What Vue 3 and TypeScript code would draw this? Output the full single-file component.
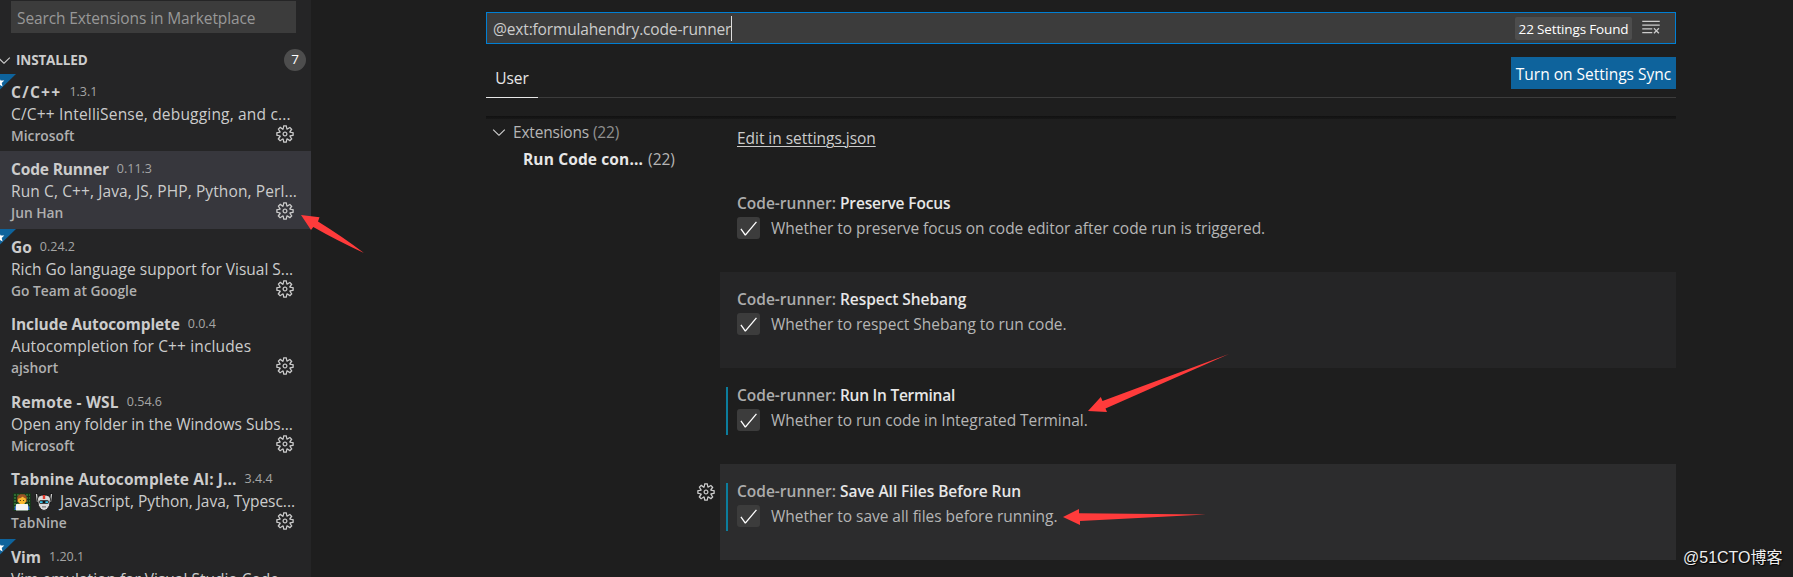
<script setup lang="ts">
interface Extension {
  name: string
  version: string
  description: string
  publisher: string
  /** letter spacing of the name and of the description, in px */
  tracking: [number, number]
  recommended?: boolean
  selected?: boolean
  emoji?: boolean
}

interface Setting {
  label: string
  description: string
  /** letter spacing of the label, in px */
  tracking: number
  modified?: boolean
  shade?: 'hovered' | 'focused'
}

const extensions: Extension[] = [
  { name: 'C/C++', version: '1.3.1', description: 'C/C++ IntelliSense, debugging, and c...', publisher: 'Microsoft', tracking: [1.3, 0.18], recommended: true },
  { name: 'Code Runner', version: '0.11.3', description: 'Run C, C++, Java, JS, PHP, Python, Perl...', publisher: 'Jun Han', tracking: [-0.15, 0.11], selected: true },
  { name: 'Go', version: '0.24.2', description: 'Rich Go language support for Visual S...', publisher: 'Go Team at Google', tracking: [0, 0], recommended: true },
  { name: 'Include Autocomplete', version: '0.0.4', description: 'Autocompletion for C++ includes', publisher: 'ajshort', tracking: [-0.1, 0.14] },
  { name: 'Remote - WSL', version: '0.54.6', description: 'Open any folder in the Windows Subs...', publisher: 'Microsoft', tracking: [0.2, -0.03] },
  { name: 'Tabnine Autocomplete AI: J...', version: '3.4.4', description: 'JavaScript, Python, Java, Typesc...', publisher: 'TabNine', tracking: [0.1, -0.03], emoji: true },
  { name: 'Vim', version: '1.20.1', description: 'Vim emulation for Visual Studio Code', publisher: 'vscodevim', tracking: [0, 0], recommended: true },
]

const settings: Setting[] = [
  { label: 'Preserve Focus', description: 'Whether to preserve focus on code editor after code run is triggered.', tracking: -0.14 },
  { label: 'Respect Shebang', description: 'Whether to respect Shebang to run code.', tracking: -0.06, shade: 'hovered' },
  { label: 'Run In Terminal', description: 'Whether to run code in Integrated Terminal.', tracking: -0.26, modified: true },
  { label: 'Save All Files Before Run', description: 'Whether to save all files before running.', tracking: -0.06, modified: true, shade: 'focused' },
]

const gear =
  'M9.1 4.4L8.6 2H7.4l-.5 2.4-.7.3-2-1.3-.9.8 1.3 2-.2.7-2.4.5v1.2l2.4.5.3.8-1.3 2 .8.8 2-1.3.8.3.4 2.3h1.2l.5-2.4.8-.3 2 1.3.8-.8-1.3-2 .3-.8 2.3-.4V7.4l-2.4-.5-.3-.8 1.3-2-.8-.8-2 1.3-.7-.2zM9.4 1l.5 2.4L12 2.1l2 2-1.4 2.1 2.4.4v2.8l-2.4.5L14 12l-2 2-2.1-1.4-.5 2.4H6.6l-.5-2.4L4 13.9l-2-2 1.4-2.1L1 9.4V6.6l2.4-.5L2.1 4l2-2 2.1 1.4.4-2.4h2.8zm.6 7c0 1.1-.9 2-2 2s-2-.9-2-2 .9-2 2-2 2 .9 2 2zM8 9c.6 0 1-.4 1-1s-.4-1-1-1-1 .4-1 1 .4 1 1 1z'
const chevron = 'M7.976 10.072l4.357-4.357.62.618L8.284 11h-.618L3 6.333l.619-.618 4.357 4.357z'
const check = 'M14.431 3.323l-8.47 10-.79-.036-3.35-4.77.818-.574 2.978 4.24 8.051-9.506.764.646z'
const clearAll =
  'M10 12.6l.7.7 1.6-1.6 1.6 1.6.8-.7L13 11l1.7-1.6-.8-.8-1.6 1.7-1.6-1.7-.7.8 1.6 1.6-1.6 1.6zM1 4h14V3H1v1zm0 3h14V6H1v1zm8 2.5V9H1v1h8v-.5zM9 13v-1H1v1h8z'
</script>

<template>
  <div class="workbench">
    <aside class="sidebar">
      <div class="market-search"><span>Search Extensions in Marketplace</span></div>
      <header class="section">
        <svg class="section-chevron" viewBox="0 0 16 16"><path :d="chevron" /></svg>
        <span class="section-title">INSTALLED</span>
        <span class="count">7</span>
      </header>
      <ul class="extensions">
        <li v-for="ext in extensions" :key="ext.name" class="extension" :class="{ selected: ext.selected }">
          <svg v-if="ext.recommended" class="ribbon" viewBox="0 0 16 16">
            <path d="M0 0H16L0 15.5Z" fill="#0e639c" />
            <path d="M-.9 3.200L.6 6.500 4.300 6.600 1.700 9 2.600 12.500-.9 10.600Z" fill="#fff" />
          </svg>
          <div class="ext-head">
            <span class="ext-name" :style="{ letterSpacing: ext.tracking[0] + 'px' }">{{ ext.name }}</span>
            <span class="ext-version">{{ ext.version }}</span>
          </div>
          <div class="ext-desc">
            <span v-if="ext.emoji" class="emojis">
              <svg viewBox="0 0 18 18">
                <rect width="18" height="18" rx="1" fill="#17351a" />
                <path d="M1 2h16M1 5h16M1 8h16M1 11h16M1 14h16" stroke="#46a04b" stroke-width="1" stroke-dasharray="2 1" />
                <path d="M4 9V5Q4.500 1 9 1T14 5V9Z" fill="#8a4b22" />
                <circle cx="9" cy="7.300" r="4" fill="#f8b92f" />
                <path d="M4.500 5.500Q8 6 9.500 3.500 11 5.500 13.500 5.500L12 2H6Z" fill="#9a5527" />
                <circle cx="7.400" cy="7.500" r=".6" fill="#3b2410" />
                <circle cx="10.600" cy="7.500" r=".6" fill="#3b2410" />
                <path d="M1.500 17Q1.500 11 6 11H12Q16.500 11 16.500 17Z" fill="#3d7be0" />
                <rect x="3" y="11" width="12" height="6.500" rx=".5" fill="#f4f4f4" />
              </svg>
              <svg viewBox="0 0 18 18">
                <path d="M1.500 .5L2.500 9M16.500 .5L15.500 9" stroke="#111" stroke-width="2.600" />
                <path d="M1.500 1L2.500 9M16.500 1L15.500 9" stroke="#cfcfcf" stroke-width="1.300" />
                <path d="M2.500 6Q3 2 9 2T15.500 6L14.500 12.500Q12.500 17.500 9 17.500T3.500 12.500Z" fill="#dadada" stroke="#0a0a0a" stroke-width=".8" />
                <path d="M7.800 2h2.400V6H7.800Z" fill="#e23b2e" />
                <rect x="4.300" y="7.200" width="9.400" height="3.600" rx="1.200" fill="#111" />
                <path d="M5 8.200h2.600v1.800H5ZM10.400 8.200H13v1.800h-2.600Z" fill="#36c6ec" />
                <path d="M7 13.400h4v1h-4Z" fill="#666" />
              </svg>
            </span>
            <span class="ext-text" :style="{ letterSpacing: ext.tracking[1] + 'px' }">{{ ext.description }}</span>
          </div>
          <div class="ext-foot">
            <span class="ext-publisher">{{ ext.publisher }}</span>
            <svg class="gear" viewBox="0 0 16 16"><path :d="gear" /></svg>
          </div>
        </li>
      </ul>
    </aside>

    <main class="editor">
      <div class="settings-search">
        <span class="query">@ext:formulahendry.code-runner</span>
        <i class="caret"></i>
        <span class="found"><span>22 Settings Found</span></span>
        <svg class="clear" viewBox="0 0 16 16"><path :d="clearAll" /></svg>
      </div>
      <nav class="tabs">
        <span class="tab"><span>User</span></span>
        <button class="sync"><span>Turn on Settings Sync</span></button>
      </nav>
      <div class="shadow"></div>
      <div class="body">
        <div class="toc">
          <div class="toc-row">
            <svg class="toc-chevron" viewBox="0 0 16 16"><path :d="chevron" /></svg>
            <span class="toc-group">Extensions</span>
            <span class="toc-count dim">(22)</span>
          </div>
          <div class="toc-row child">
            <span class="toc-label">Run Code con...</span>
            <span class="toc-count">(22)</span>
          </div>
        </div>
        <div class="list">
          <div class="json"><a>Edit in settings.json</a></div>
          <section v-for="s in settings" :key="s.label" class="setting" :class="[s.shade, { modified: s.modified }]">
            <svg v-if="s.shade === 'focused'" class="gear setting-gear" viewBox="0 0 16 16"><path :d="gear" /></svg>
            <h3><span class="cat">Code-runner:</span> <span class="lbl" :style="{ letterSpacing: s.tracking + 'px' }">{{ s.label }}</span></h3>
            <div class="value">
              <span class="box"><svg viewBox="0 0 16 16"><path :d="check" /></svg></span>
              <span class="desc">{{ s.description }}</span>
            </div>
          </section>
        </div>
      </div>
    </main>

    <svg class="arrows" viewBox="0 0 1793 577">
      <path d="M301 215L319.500 217.300 318 221.500Q343 237 364 253 336 240 313.300 227L311 230Z" />
      <path d="M1088 411L1100.800 397 1102.500 401 1229 354 1105.500 408.500 1107 412Z" />
      <path d="M1063 517L1079 509V513.300L1206 514.500 1080 521V525Z" />
    </svg>
    <div class="watermark">@51CTO博客</div>
  </div>
</template>

<style>
body {
  margin: 0;
  background: #1e1e1e;
}
</style>

<style scoped>
.workbench {
  position: relative;
  display: flex;
  width: 1793px;
  height: 577px;
  overflow: hidden;
  background: #1e1e1e;
  color: #ccc;
  font: 15.5px/22px 'Open Sans', 'Noto Sans', sans-serif;
  white-space: nowrap;
}
svg {
  display: block;
  flex: none;
  fill: #ccc;
}
.sidebar {
  box-sizing: border-box;
  width: 311px;
  height: 577px;
  flex: none;
  overflow: hidden;
  padding-top: 1px;
  background: #252526;
}
.market-search {
  width: 279px;
  height: 32px;
  margin-left: 11px;
  padding-left: 6px;
  background: #3c3c3c;
  color: #989898;
  line-height: 35px;
  letter-spacing: -0.11px;
}
.section {
  display: flex;
  align-items: center;
  height: 27px;
  margin-top: 13.5px;
}
.section-chevron {
  width: 20px;
  height: 20px;
  margin-left: -6px;
}
.section-title {
  margin-left: 2px;
  font-size: 13.5px;
  font-weight: 700;
  letter-spacing: -0.15px;
}
.count {
  width: 22px;
  height: 22px;
  margin: 0 5px 0 auto;
  border-radius: 11px;
  background: #4d4d4d;
  color: #fff;
  font-size: 13.5px;
  line-height: 21px;
  text-align: center;
}
.extensions {
  margin: 0;
  padding: 0;
  list-style: none;
}
.extension {
  position: relative;
  box-sizing: border-box;
  height: 77.5px;
  padding: 7px 16px 0 11px;
}
.selected {
  background: #37373d;
}
.ribbon {
  position: absolute;
  top: 0;
  left: 0;
  width: 16px;
  height: 16px;
}
.ext-head {
  display: flex;
  height: 22px;
}
.ext-name {
  font-weight: 700;
}
.ext-version {
  margin-left: 8px;
  color: #a5a5a5;
  font-size: 12.5px;
}
.ext-desc {
  display: flex;
  align-items: center;
  height: 23px;
  line-height: 25px;
}
.emojis {
  display: flex;
  gap: 4px;
  margin: 0 7px 0 2px;
}
.emojis svg {
  width: 18px;
  height: 18px;
}
.ext-foot {
  display: flex;
  justify-content: space-between;
  height: 20px;
}
.ext-publisher {
  color: #b0b0b0;
  font-size: 13.8px;
  font-weight: 600;
  line-height: 20px;
}
.gear {
  width: 20px;
  height: 20px;
  margin-top: -2px;
}
.editor {
  width: 1190px;
  margin-left: 175px;
  padding-top: 12px;
}
.settings-search {
  display: flex;
  align-items: center;
  box-sizing: border-box;
  height: 32px;
  padding: 0 14px 0 6px;
  border: 1px solid #007fd4;
  background: #3c3c3c;
}
.query {
  padding-top: 2px;
  letter-spacing: -0.15px;
}
.caret {
  width: 1px;
  height: 25px;
  background: #ddd;
}
.found {
  box-sizing: border-box;
  width: 117px;
  height: 23px;
  margin-left: auto;
  border-radius: 2px;
  background: #4d4d4d;
  color: #fff;
  font-size: 13.5px;
  line-height: 24px;
  letter-spacing: -0.15px;
  text-align: center;
}
.clear {
  width: 20px;
  height: 20px;
  margin: -2px 0 0 9px;
}
.tabs {
  display: flex;
  justify-content: space-between;
  box-sizing: border-box;
  height: 54px;
  padding-top: 13px;
  border-bottom: 1px solid #3c3c3c;
}
.tab {
  box-sizing: border-box;
  width: 52px;
  height: 41px;
  border-bottom: 1px solid #e7e7e7;
  color: #e7e7e7;
  line-height: 43px;
  text-align: center;
}
.sync {
  width: 165px;
  height: 32px;
  padding: 0;
  border: 0;
  background: #0e639c;
  color: #fff;
  font: inherit;
  line-height: 34px;
}
.shadow {
  height: 3px;
  margin-top: 18px;
  background: linear-gradient(#111, #181818);
}
.body {
  display: flex;
}
.toc {
  width: 234px;
  margin-top: -1px;
}
.toc-row {
  display: flex;
  height: 27px;
  align-items: center;
  color: #b5b5b5;
}
.toc-chevron {
  width: 20px;
  height: 20px;
  margin: 0 4px 0 3px;
}
.toc-group {
  letter-spacing: -0.2px;
}
.toc-count {
  margin-left: 5px;
}
.dim {
  margin-left: 4px;
  color: #909090;
  letter-spacing: -0.2px;
}
.child {
  padding-left: 37px;
}
.toc-label {
  color: #e7e7e7;
  font-weight: 700;
  letter-spacing: 0.13px;
}
.list {
  width: 956px;
}
.json {
  height: 57px;
  padding-left: 17px;
  line-height: 38px;
}
.json a {
  letter-spacing: -0.04px;
  text-decoration: underline;
  text-underline-offset: 2px;
  text-decoration-thickness: 1px;
}
.setting {
  position: relative;
  box-sizing: border-box;
  height: 96px;
  padding: 16px 0 0 17px;
}
.hovered {
  background: #252526;
}
.focused {
  background: #2c2c2d;
}
.modified::before {
  position: absolute;
  top: 19px;
  left: 6px;
  width: 2px;
  height: 48px;
  background: #0c7d9d;
  content: '';
}
.setting-gear {
  position: absolute;
  top: 20px;
  left: -24px;
}
h3 {
  height: 22px;
  margin: 0 0 3px;
  font: inherit;
  font-weight: 600;
}
.cat {
  color: #acacac;
}
.lbl {
  color: #e7e7e7;
}
.value {
  display: flex;
}
.box {
  display: flex;
  align-items: center;
  justify-content: center;
  width: 23px;
  height: 22px;
  margin-right: 11px;
  border-radius: 3px;
  background: #3c3c3c;
}
.box svg {
  width: 21px;
  height: 21px;
  fill: #fff;
}
.desc {
  color: #b5b5b5;
  letter-spacing: -0.04px;
}
.arrows {
  position: absolute;
  inset: 0;
  width: 1793px;
  height: 577px;
  fill: #ff3b3b;
}
.watermark {
  position: absolute;
  top: 547px;
  left: 1683px;
  color: #eee;
  font: 16px/22px 'Liberation Sans', 'Noto Sans CJK SC', sans-serif;
  text-shadow: 1px 1px 1px #000;
}
</style>
